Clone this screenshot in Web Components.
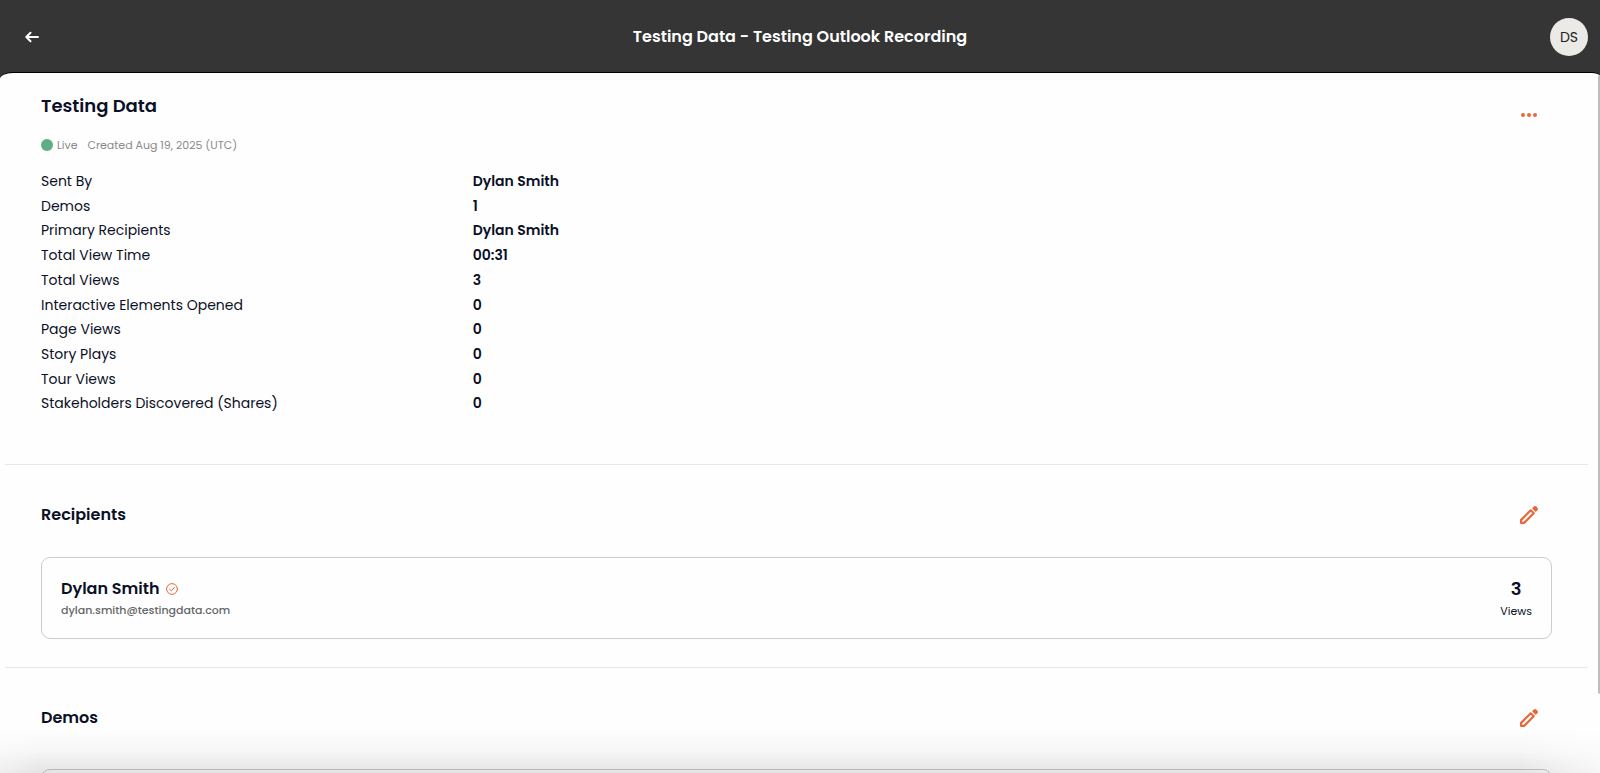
<!DOCTYPE html>
<html lang="en">
<head>
  <meta charset="UTF-8">
  <meta name="viewport" content="width=device-width, initial-scale=1.0">
  <title>Testing Data - Testing Outlook Recording</title>
  <style>
    body {
      --ink: #0b1026;
      --muted: #8a8a8a;
      --accent: #e5693a;
      --line: #e8e8e8;
      margin: 0;
      background: #353535;
      color: var(--ink);
      font-family: Poppins, Inter, "Open Sans", sans-serif;
      font-size: 14px;
    }
  </style>
</head>
<body>
  <demo-page>
    <top-bar slot="bar" initials="DS">Testing Data - Testing Outlook Recording</top-bar>
    <send-summary heading="Testing Data" status="Live" created="Created Aug 19, 2025 (UTC)">
      <stat-row label="Sent By">Dylan Smith</stat-row>
      <stat-row label="Demos">1</stat-row>
      <stat-row label="Primary Recipients">Dylan Smith</stat-row>
      <stat-row label="Total View Time">00:31</stat-row>
      <stat-row label="Total Views">3</stat-row>
      <stat-row label="Interactive Elements Opened">0</stat-row>
      <stat-row label="Page Views">0</stat-row>
      <stat-row label="Story Plays">0</stat-row>
      <stat-row label="Tour Views">0</stat-row>
      <stat-row label="Stakeholders Discovered (Shares)">0</stat-row>
    </send-summary>
    <page-section heading="Recipients">
      <recipient-card name="Dylan Smith" email="dylan.smith@testingdata.com" views="3"></recipient-card>
    </page-section>
    <page-section heading="Demos" class="loose">
      <demo-card></demo-card>
    </page-section>
  </demo-page>

  <script>
    class BaseElement extends HTMLElement {
      constructor() {
        super();
        this.attachShadow({mode: 'open'});
      }

      connectedCallback() {
        const template = document.createElement('template');
        template.innerHTML = this.getTemplate();
        this.shadowRoot.replaceChildren(template.content.cloneNode(true));
      }

      attr(name) {
        return this.getAttribute(name) || '';
      }
    }

    class DemoPage extends BaseElement {
      getTemplate() {
        return `
          <style>
            :host {
              display: flex;
              flex-direction: column;
              position: relative;
              height: 100vh;
              overflow: hidden;
            }
            main {
              flex: 1;
              min-height: 0;
              box-sizing: border-box;
              padding: 0 12px 0 5px;
              overflow-y: auto;
              scrollbar-width: none;
              background: #fefefe;
              border-top: 1px solid #000;
              border-radius: 13px 9px 0 0 / 7px 4px 0 0;
            }
            .thumb {
              position: absolute;
              top: 76px;
              right: 0;
              width: 2px;
              height: 80%;
              background: #bdbdbd;
              border-radius: 0 0 0 2px;
            }
            .fade {
              position: absolute;
              left: 0;
              right: 0;
              bottom: 0;
              height: 44px;
              background: linear-gradient(rgba(0, 0, 0, 0), rgba(0, 0, 0, .03) 50%, rgba(0, 0, 0, .1));
              mask-image: linear-gradient(90deg, rgba(0, 0, 0, .6), #000 40px, #000 calc(100% - 80px), rgba(0, 0, 0, .3));
              pointer-events: none;
            }
          </style>
          <slot name="bar"></slot>
          <main><slot></slot></main>
          <div class="thumb"></div>
          <div class="fade"></div>
        `;
      }
    }

    class TopBar extends BaseElement {
      getTemplate() {
        return `
          <style>
            :host {
              display: block;
            }
            header {
              display: grid;
              grid-template-columns: 1fr auto 1fr;
              align-items: center;
              height: 70px;
              padding: 2px 12px 0;
              background: #353535;
              color: #fff;
            }
            h1 {
              margin: 0;
              font-size: 16px;
              font-weight: 600;
              line-height: 24px;
            }
            button {
              display: grid;
              place-items: center;
              padding: 0;
              border: 0;
              background: none;
              color: inherit;
              font: inherit;
              cursor: pointer;
            }
            .back {
              width: 40px;
              height: 40px;
            }
            .avatar {
              justify-self: end;
              width: 38px;
              height: 38px;
              border-radius: 50%;
              background: #ebeae7;
              color: #222;
            }
          </style>
          <header>
            <button class="back" aria-label="Back">
              <svg width="14" height="12" viewBox="0 0 14 12" fill="none" stroke="currentColor" stroke-width="2" stroke-linecap="round" stroke-linejoin="round">
                <path d="M13 6H1.5M5.5 1.7 1.3 6l4.2 4.3"/>
              </svg>
            </button>
            <h1><slot></slot></h1>
            <button class="avatar">${this.attr('initials')}</button>
          </header>
        `;
      }
    }

    class SendSummary extends BaseElement {
      getTemplate() {
        return `
          <style>
            :host {
              display: block;
              padding: 19px 36px 48px;
            }
            .head {
              display: flex;
              justify-content: space-between;
              align-items: flex-start;
              margin-bottom: 14px;
            }
            h2 {
              margin: 0 0 15px;
              font-size: 18px;
              font-weight: 600;
              line-height: 28px;
            }
            p {
              display: flex;
              align-items: center;
              margin: 0;
              color: var(--muted);
              font-size: 11px;
              line-height: 20px;
            }
            .dot {
              width: 12px;
              height: 12px;
              margin-right: 4px;
              border-radius: 50%;
              background: #5fad87;
            }
            .created {
              margin-left: 10px;
            }
            button {
              display: grid;
              place-items: center;
              width: 46px;
              height: 46px;
              padding: 0;
              border: 0;
              background: none;
              color: var(--accent);
              cursor: pointer;
            }
            .stats {
              display: grid;
              grid-auto-rows: 1fr;
              height: 247px;
            }
          </style>
          <div class="head">
            <div>
              <h2>${this.attr('heading')}</h2>
              <p>
                <span class="dot"></span>
                <span>${this.attr('status')}</span>
                <span class="created">${this.attr('created')}</span>
              </p>
            </div>
            <button aria-label="More actions">
              <svg width="16" height="4" viewBox="0 0 16 4" fill="currentColor">
                <circle cx="2" cy="2" r="2"/><circle cx="8" cy="2" r="2"/><circle cx="14" cy="2" r="2"/>
              </svg>
            </button>
          </div>
          <div class="stats"><slot></slot></div>
        `;
      }
    }

    class StatRow extends BaseElement {
      getTemplate() {
        return `
          <style>
            :host {
              display: block;
            }
            dl {
              display: grid;
              grid-template-columns: 2fr 5fr;
              margin: 0;
              font-size: 14px;
              line-height: 24px;
            }
            dd {
              margin: 0;
              font-weight: 600;
            }
          </style>
          <dl>
            <dt>${this.attr('label')}</dt>
            <dd><slot></slot></dd>
          </dl>
        `;
      }
    }

    class PageSection extends BaseElement {
      getTemplate() {
        return `
          <style>
            :host {
              display: block;
              padding: 27px 36px 28px;
              border-top: 1px solid var(--line);
            }
            .head {
              display: flex;
              justify-content: space-between;
              align-items: center;
              margin-bottom: 19px;
            }
            :host(.loose) .head {
              margin-bottom: 28px;
            }
            h3 {
              margin: 0;
              font-size: 16px;
              font-weight: 600;
              line-height: 24px;
            }
            button {
              display: grid;
              place-items: center;
              width: 46px;
              height: 46px;
              padding: 0;
              border: 0;
              background: none;
              color: var(--accent);
              cursor: pointer;
            }
          </style>
          <div class="head">
            <h3>${this.attr('heading')}</h3>
            <button aria-label="Edit ${this.attr('heading')}">
              <svg width="18" height="18" viewBox="0 0 18 18">
                <path d="M1.100 16.900v-3L10.700 4.300l3 3L4.100 16.900z" fill="none" stroke="currentColor" stroke-width="2.200" stroke-linejoin="round"/>
                <path d="M12 2.300 13.500.8a2.200 2.200 0 0 1 3.100 0l.6.6a2.200 2.200 0 0 1 0 3.100L15.700 6z" fill="currentColor"/>
              </svg>
            </button>
          </div>
          <slot></slot>
        `;
      }
    }

    class RecipientCard extends BaseElement {
      getTemplate() {
        return `
          <style>
            :host {
              display: flex;
              justify-content: space-between;
              padding: 19px 19px 17px;
              border: 1px solid #cfcbc9;
              border-radius: 9px;
            }
            h4 {
              display: flex;
              align-items: center;
              gap: 6px;
              margin: 0;
              font-size: 16px;
              font-weight: 600;
              line-height: 24px;
            }
            p {
              margin: 0;
              color: #666;
              font-size: 11px;
              font-weight: 500;
              line-height: 18px;
            }
            svg {
              color: var(--accent);
            }
            .views {
              display: flex;
              flex-direction: column;
              align-items: center;
              font-size: 11px;
              line-height: 20px;
            }
            .views strong {
              font-size: 18px;
              font-weight: 600;
              line-height: 24px;
            }
          </style>
          <div>
            <h4>
              ${this.attr('name')}
              <svg width="12" height="12" viewBox="0 0 12 12" fill="none" stroke="currentColor" stroke-linecap="round" stroke-linejoin="round">
                <circle cx="6" cy="6" r="5.400"/>
                <path d="M3.600 6.200 5.300 7.800 8.500 4.400"/>
              </svg>
            </h4>
            <p>${this.attr('email')}</p>
          </div>
          <div class="views">
            <strong>${this.attr('views')}</strong>
            <span>Views</span>
          </div>
        `;
      }
    }

    class DemoCard extends BaseElement {
      getTemplate() {
        return `
          <style>
            :host {
              display: block;
              min-height: 80px;
              border: 1px solid #cfcbc9;
              border-radius: 9px;
            }
          </style>
          <slot></slot>
        `;
      }
    }

    customElements.define('demo-page', DemoPage);
    customElements.define('top-bar', TopBar);
    customElements.define('send-summary', SendSummary);
    customElements.define('stat-row', StatRow);
    customElements.define('page-section', PageSection);
    customElements.define('recipient-card', RecipientCard);
    customElements.define('demo-card', DemoCard);
  </script>
</body>
</html>
